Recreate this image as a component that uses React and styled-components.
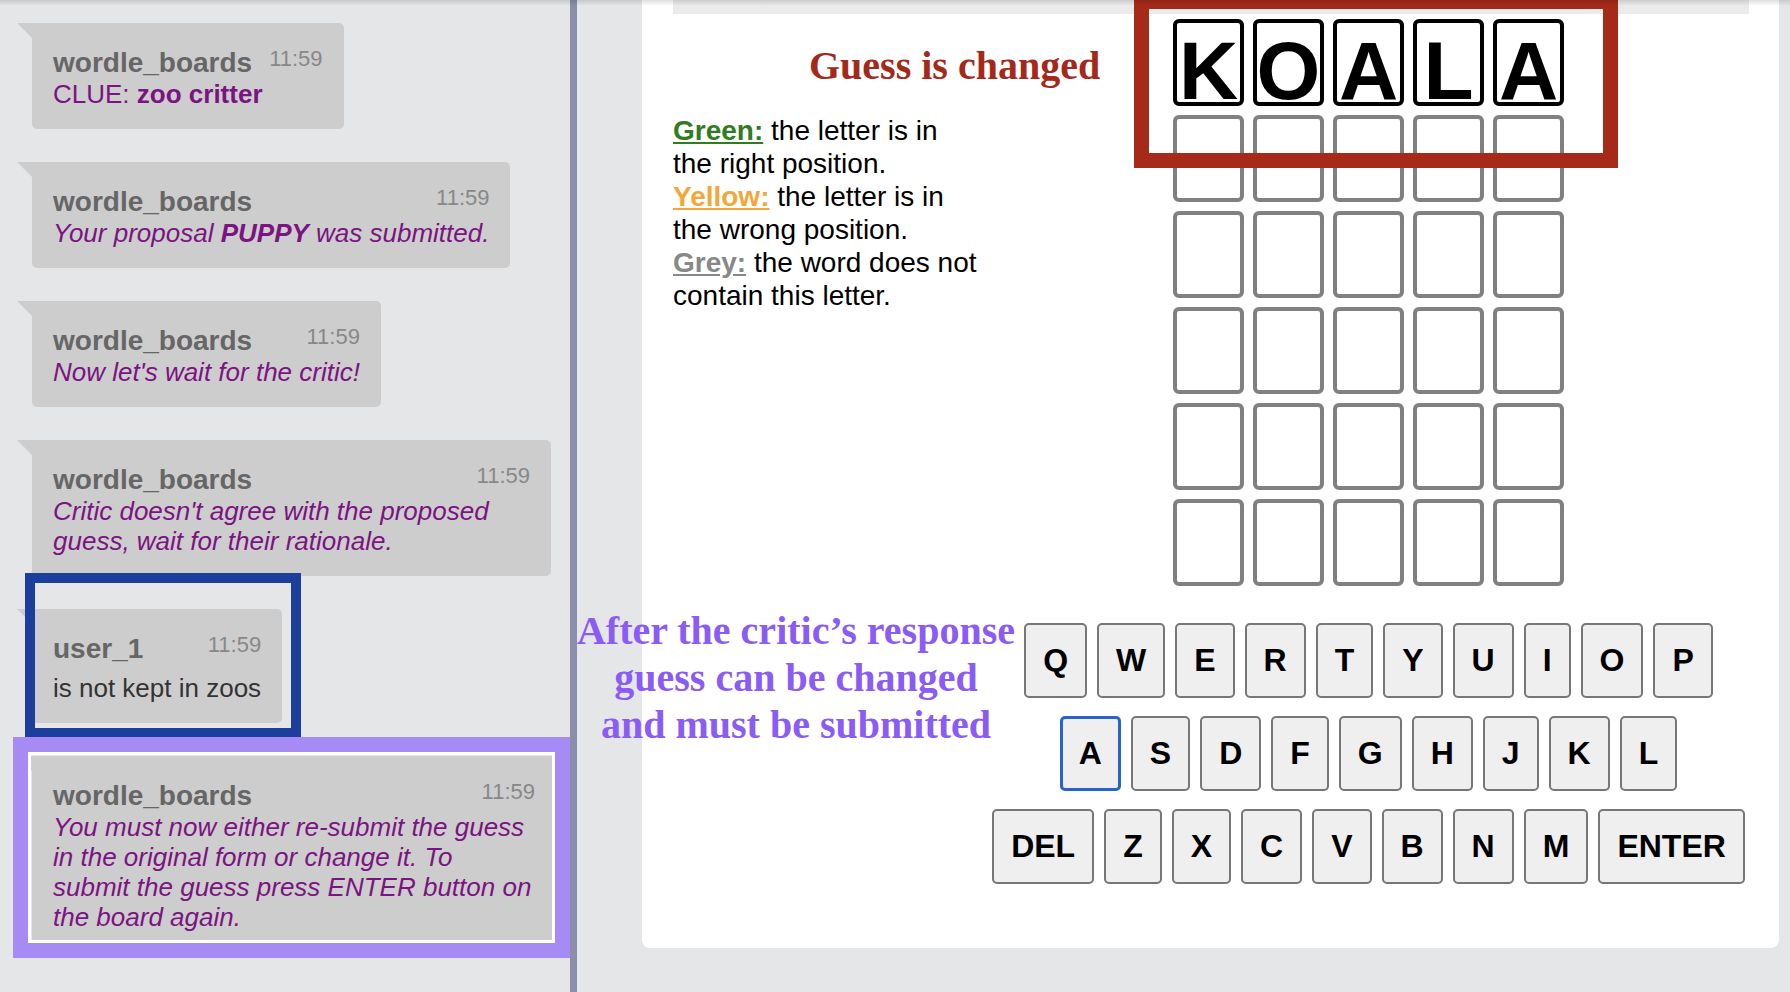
import React from "react";
import styled, { createGlobalStyle, css } from "styled-components";

const GlobalStyle = createGlobalStyle`
  html, body {
    margin: 0;
    padding: 0;
  }
  body {
    background: #e5e6e8;
    font-family: "Liberation Sans", Arial, Helvetica, sans-serif;
    overflow: hidden;
  }
`;

const Page = styled.div`
  position: relative;
  display: flex;
  width: 1790px;
  height: 992px;
  overflow: hidden;
  background: #e5e6e8;

  &::before {
    content: "";
    position: absolute;
    left: 0;
    right: 0;
    top: 0;
    height: 6px;
    background: linear-gradient(rgba(0, 0, 0, 0.13), rgba(0, 0, 0, 0));
    z-index: 5;
  }
`;

const ChatPanel = styled.div`
  width: 570px;
  flex: none;
  box-sizing: border-box;
  padding: 23px 0 0 32px;
  display: flex;
  flex-direction: column;
  align-items: flex-start;
  gap: 33px;
`;

const Divider = styled.div`
  width: 7px;
  flex: none;
  background: #8a8fab;
`;

const Bubble = styled.div`
  position: relative;
  max-width: ${(p) => (p.$wide ? "524px" : "519px")};
  box-sizing: border-box;
  padding: 24px 21px 20px;
  background: #cdcdcd;
  border-radius: 0 5px 5px 5px;

  &::before {
    content: "";
    position: absolute;
    left: -15px;
    top: 0;
    width: 0;
    height: 0;
    border-top: 15px solid #cdcdcd;
    border-left: 15px solid transparent;
  }
`;

const BubbleHead = styled.div`
  display: flex;
  justify-content: space-between;
  align-items: flex-start;
  gap: 17px;
`;

const Sender = styled.span`
  font-size: 28px;
  line-height: 32px;
  font-weight: bold;
  color: #666;
`;

const Time = styled.span`
  font-size: 22px;
  line-height: 24px;
  color: #888;
`;

const Message = styled.div`
  font-size: 26px;
  line-height: 30px;
  color: ${(p) => (p.$user ? "#333" : "#7b1482")};
  font-style: ${(p) => (p.$italic ? "italic" : "normal")};
  margin-top: ${(p) => (p.$user ? "8px" : "0")};
`;

const Stage = styled.div`
  flex: 1;
  padding: 0 11px 0 65px;
`;

const Card = styled.div`
  height: 948px;
  box-sizing: border-box;
  padding: 0 30px 0 31px;
  background: #fff;
  border-radius: 0 0 8px 8px;
`;

const TopStrip = styled.div`
  height: 14px;
  background: #ebebeb;
`;

const CardBody = styled.div`
  display: flex;
`;

const Legend = styled.div`
  width: 315px;
  flex: none;
  margin-top: 100px;
  font-size: 28px;
  line-height: 33px;
  color: #000;
`;

const Swatch = styled.span`
  font-weight: bold;
  text-decoration: underline;
  color: ${(p) => p.$color};
`;

const GameColumn = styled.div`
  flex: 1;
  display: flex;
  flex-direction: column;
  align-items: center;
  padding-top: 5px;
`;

const Board = styled.div`
  display: grid;
  grid-template-columns: repeat(5, 71px);
  grid-auto-rows: 87px;
  gap: 9px;
`;

const Tile = styled.div`
  box-sizing: border-box;
  border: 4px solid ${(p) => (p.$filled ? "#000" : "#808080")};
  border-radius: 6px;
  display: flex;
  justify-content: center;
  align-items: flex-start;
  padding-top: 7px;
  font-size: 82px;
  line-height: 82px;
  font-weight: bold;
  color: #000;
`;

const Keyboard = styled.div`
  margin-top: 37px;
  display: flex;
  flex-direction: column;
  align-items: center;
  gap: 18px;
`;

const KeyRow = styled.div`
  display: flex;
  gap: 10px;
`;

const Key = styled.button`
  height: 75px;
  box-sizing: border-box;
  padding: 0 17px;
  border: 2px solid #777;
  border-radius: 5px;
  background: #efefef;
  font-family: "Liberation Sans", Arial, sans-serif;
  font-size: 32px;
  font-weight: bold;
  color: #000;

  ${(p) =>
    p.$active &&
    css`
      border: 3px solid #2763c8;
      padding: 0 16px;
    `}
`;

const GuessTitle = styled.div`
  position: absolute;
  left: 809px;
  top: 46px;
  font-family: "Liberation Serif", "Times New Roman", serif;
  font-weight: bold;
  font-size: 40px;
  line-height: 40px;
  color: #a4291a;
  white-space: nowrap;
`;

const CriticNote = styled.div`
  position: absolute;
  left: 566px;
  top: 607px;
  width: 460px;
  text-align: center;
  font-family: "Liberation Serif", "Times New Roman", serif;
  font-weight: bold;
  font-size: 40px;
  line-height: 47px;
  color: #8a5cf5;
`;

const Frame = styled.div`
  position: absolute;
  box-sizing: border-box;
  left: ${(p) => p.$x}px;
  top: ${(p) => p.$y}px;
  width: ${(p) => p.$w}px;
  height: ${(p) => p.$h}px;
  border: ${(p) => p.$bw}px solid ${(p) => p.$color};
  box-shadow: ${(p) => (p.$inner ? "inset 0 0 0 3px #fff" : "none")};
  pointer-events: none;
`;

const rows = [
  ["Q", "W", "E", "R", "T", "Y", "U", "I", "O", "P"],
  ["A", "S", "D", "F", "G", "H", "J", "K", "L"],
  ["DEL", "Z", "X", "C", "V", "B", "N", "M", "ENTER"],
];

const guess = ["K", "O", "A", "L", "A"];

function App() {
  return (
    <Page>
      <GlobalStyle />
      <ChatPanel>
        <Bubble>
          <BubbleHead>
            <Sender>wordle_boards</Sender>
            <Time>11:59</Time>
          </BubbleHead>
          <Message>
            CLUE: <b>zoo critter</b>
          </Message>
        </Bubble>
        <Bubble>
          <BubbleHead>
            <Sender>wordle_boards</Sender>
            <Time>11:59</Time>
          </BubbleHead>
          <Message $italic>
            Your proposal <b>PUPPY</b> was submitted.
          </Message>
        </Bubble>
        <Bubble>
          <BubbleHead>
            <Sender>wordle_boards</Sender>
            <Time>11:59</Time>
          </BubbleHead>
          <Message $italic>Now let's wait for the critic!</Message>
        </Bubble>
        <Bubble>
          <BubbleHead>
            <Sender>wordle_boards</Sender>
            <Time>11:59</Time>
          </BubbleHead>
          <Message $italic>
            Critic doesn't agree with the proposed guess, wait for their rationale.
          </Message>
        </Bubble>
        <Bubble>
          <BubbleHead>
            <Sender>user_1</Sender>
            <Time>11:59</Time>
          </BubbleHead>
          <Message $user>is not kept in zoos</Message>
        </Bubble>
        <Bubble $wide>
          <BubbleHead>
            <Sender>wordle_boards</Sender>
            <Time>11:59</Time>
          </BubbleHead>
          <Message $italic>
            You must now either re-submit the guess in the original form or change it. To
            submit the guess press ENTER button on the board again.
          </Message>
        </Bubble>
      </ChatPanel>
      <Divider />
      <Stage>
        <Card>
          <TopStrip />
          <CardBody>
            <Legend>
              <Swatch $color="#2f7d1f">Green:</Swatch> the letter is in
              <br />
              the right position.
              <br />
              <Swatch $color="#f2a73a">Yellow:</Swatch> the letter is in
              <br />
              the wrong position.
              <br />
              <Swatch $color="#888">Grey:</Swatch> the word does not
              <br />
              contain this letter.
            </Legend>
            <GameColumn>
              <Board>
                {Array.from({ length: 30 }).map((_, i) => (
                  <Tile key={i} $filled={i < 5}>
                    {i < 5 ? guess[i] : ""}
                  </Tile>
                ))}
              </Board>
              <Keyboard>
                {rows.map((row, r) => (
                  <KeyRow key={r}>
                    {row.map((k) => (
                      <Key key={k} $active={k === "A"}>
                        {k}
                      </Key>
                    ))}
                  </KeyRow>
                ))}
              </Keyboard>
            </GameColumn>
          </CardBody>
        </Card>
      </Stage>

      <GuessTitle>Guess is changed</GuessTitle>
      <CriticNote>
        After the critic’s response
        <br />
        guess can be changed
        <br />
        and must be submitted
      </CriticNote>
      <Frame $x={1134} $y={-6} $w={484} $h={174} $bw={15} $color="#a52a1a" />
      <Frame $x={25} $y={573} $w={276} $h={165} $bw={10} $color="#1c3f9e" />
      <Frame $x={13} $y={737} $w={557} $h={221} $bw={15} $color="#a78bf5" $inner />
    </Page>
  );
}

export default App;
